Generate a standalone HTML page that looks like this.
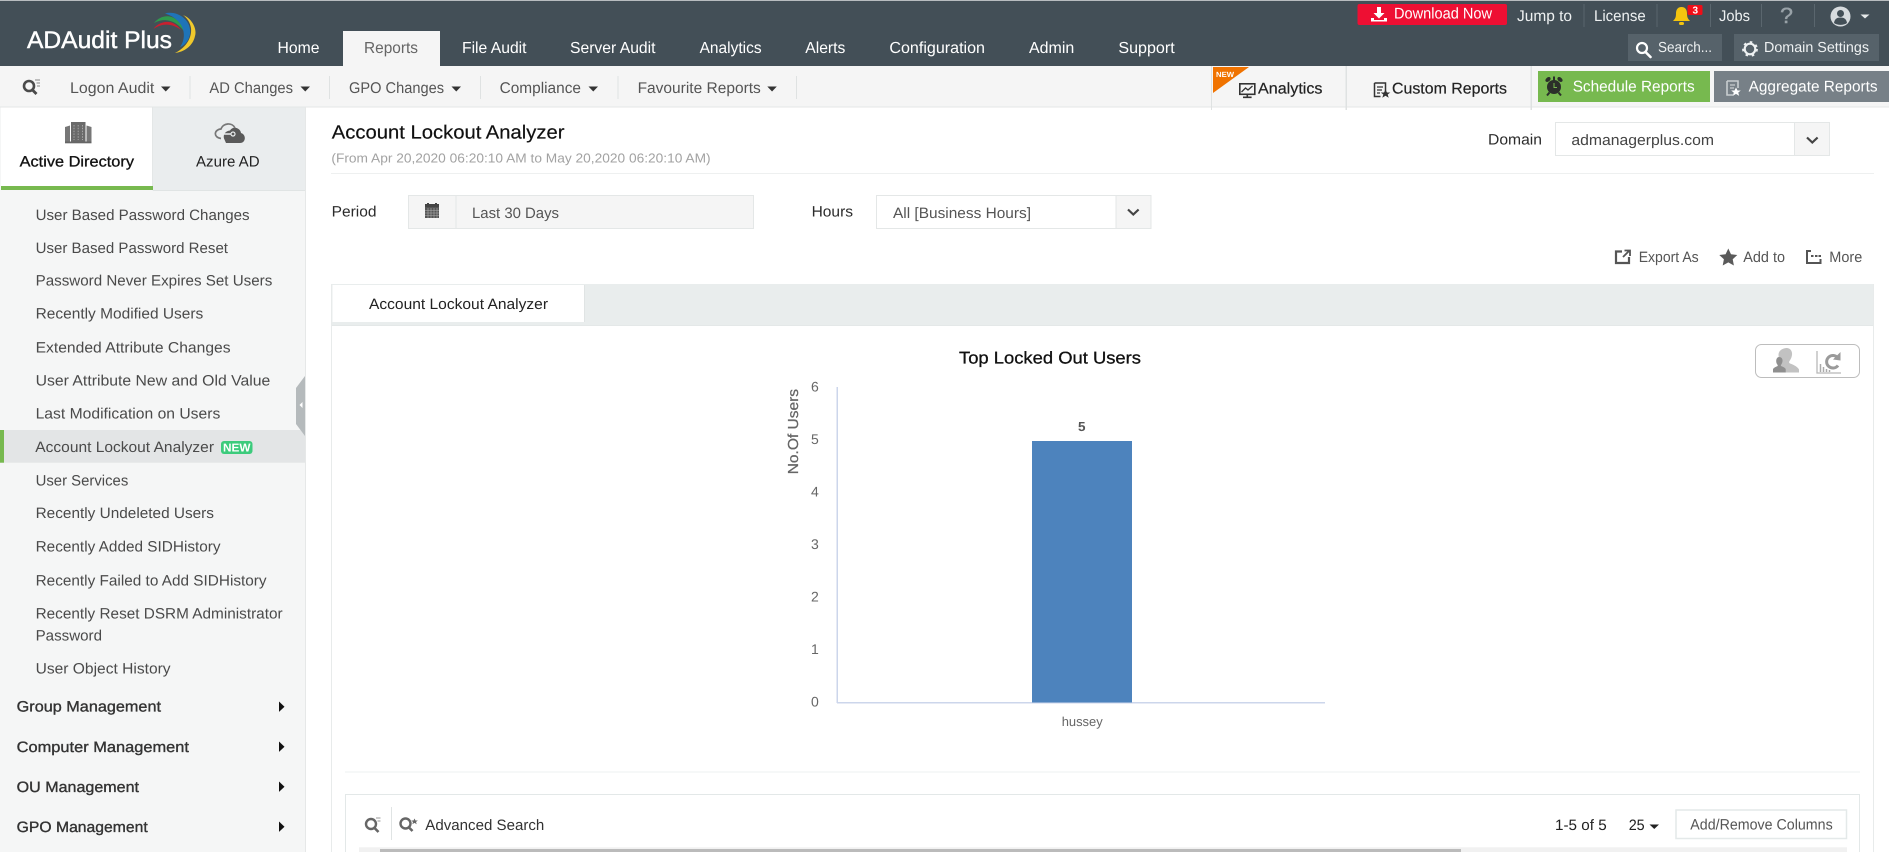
<!DOCTYPE html>
<html lang="en">
<head>
<meta charset="utf-8">
<title>ADAudit Plus - Account Lockout Analyzer</title>
<style>
html,body{margin:0;padding:0;background:#fff;width:1889px;height:852px;overflow:hidden}
svg{display:block}
text{font-family:"Liberation Sans",Arial,sans-serif;text-rendering:geometricPrecision;white-space:pre}
.nav{font-size:16px;fill:#fff}
.top{font-size:15.5px;fill:#eef1f2}
.sub{font-size:15.5px;fill:#555}
.dark{font-size:15.5px;fill:#222}
.side{font-size:15px;fill:#4a4a4a}
.group{font-size:15px;fill:#333;stroke:#333;stroke-width:.35px}
.lab{font-size:15px;fill:#2b2b2b}
.val{font-size:15px;fill:#555}
.tick{font-size:14px;fill:#666}
</style>
</head>
<body>
<svg xmlns="http://www.w3.org/2000/svg" width="1889" height="852" viewBox="0 0 1889 852">
<rect width="1889" height="852" fill="#fff"/>

<!-- Header -->
<rect y="0" width="1889" height="1" fill="#b8bcbf"/>
<rect y="1" width="1889" height="65" fill="#434f57"/>

<!-- Logo -->
<text x="27" y="48" font-size="24" fill="#fff" stroke="#fff" stroke-width=".45" textLength="145" lengthAdjust="spacingAndGlyphs">ADAudit Plus</text>
<path d="M153.500 29C158 22 172 17 181 30C172 23 162 23 153.500 29Z" fill="#c8202f"/>
<path d="M154 23C162 13 178 12 186 34C177 20 165 17 154 23Z" fill="#2f9a4d"/>
<path d="M165 13.500C177 10 192 20 190 34C189 41 184 46 180 47C187 38 186 20 165 13.500Z" fill="#1f74b8"/>
<path d="M183 15C193 19 197 30 195 36C193 46 184 52 175 53C187 47 192 37 191 28C190 22 187 18 183 15Z" fill="#f0c92c"/>

<!-- Main nav -->
<rect x="343" y="31" width="97" height="35" fill="#f5f5f5"/>
<text class="nav" x="277.500" y="53" textLength="42" lengthAdjust="spacingAndGlyphs">Home</text>
<text class="nav" x="364" y="53" textLength="54" lengthAdjust="spacingAndGlyphs" style="fill:#666">Reports</text>
<text class="nav" x="462" y="53" textLength="64.500" lengthAdjust="spacingAndGlyphs">File Audit</text>
<text class="nav" x="570" y="53" textLength="85.500" lengthAdjust="spacingAndGlyphs">Server Audit</text>
<text class="nav" x="699.600" y="53" textLength="62" lengthAdjust="spacingAndGlyphs">Analytics</text>
<text class="nav" x="805.300" y="53" textLength="40" lengthAdjust="spacingAndGlyphs">Alerts</text>
<text class="nav" x="889.400" y="53" textLength="95.600" lengthAdjust="spacingAndGlyphs">Configuration</text>
<text class="nav" x="1029" y="53" textLength="45.300" lengthAdjust="spacingAndGlyphs">Admin</text>
<text class="nav" x="1118.400" y="53" textLength="56.300" lengthAdjust="spacingAndGlyphs">Support</text>

<!-- Top right -->
<rect x="1357.500" y="4" width="149.500" height="21" rx="2" fill="#ee0f33"/>
<path d="M1377 7h4v6h3.500l-5.500 5.500l-5.500-5.500h3.500zM1371 18h3v2h10v-2h3v3.500h-16z" fill="#fff"/>
<text class="top" x="1394" y="18.500" textLength="98" lengthAdjust="spacingAndGlyphs" style="fill:#fff">Download Now</text>
<text class="top" x="1517" y="21" textLength="55" lengthAdjust="spacingAndGlyphs">Jump to</text>
<rect x="1583.500" y="4" width="1" height="23" fill="#5a666e"/>
<text class="top" x="1594" y="21" textLength="51.700" lengthAdjust="spacingAndGlyphs">License</text>
<rect x="1656.500" y="4" width="1" height="23" fill="#5a666e"/>
<path d="M1681.500 7c-4 0-5.500 3-5.500 6.500c0 4-1 5.500-3 7.500h17c-2-2-3-3.500-3-7.500c0-3.500-1.500-6.500-5.500-6.500z" fill="#f4c40f"/>
<rect x="1679" y="22" width="5" height="3" rx="1.500" fill="#f4c40f"/>
<rect x="1687.500" y="5" width="15" height="10" rx="1.500" fill="#f00d17"/>
<text x="1692.500" y="13.500" font-size="10" font-weight="bold" fill="#fff">3</text>
<rect x="1710" y="4" width="1" height="23" fill="#5a666e"/>
<text class="top" x="1719" y="21" textLength="31" lengthAdjust="spacingAndGlyphs">Jobs</text>
<rect x="1761" y="4" width="1" height="23" fill="#5a666e"/>
<text x="1780" y="23" font-size="22" fill="#99a2a8" stroke="#99a2a8" stroke-width=".4" textLength="13" lengthAdjust="spacingAndGlyphs">?</text>
<rect x="1814" y="4" width="1" height="23" fill="#5a666e"/>
<circle cx="1840.500" cy="16.500" r="10" fill="#d7dbde"/>
<circle cx="1840.500" cy="13.500" r="3.500" fill="#434f57"/>
<path d="M1834 23c.5-4 3-5.500 6.500-5.500s6 1.500 6.500 5.500c-3.500 2.500-9.500 2.500-13 0z" fill="#434f57"/>
<path d="M1860.500 14.500h9l-4.500 4z" fill="#e6e9ea"/>

<rect x="1628" y="34" width="94" height="27" fill="#56626a"/>
<circle cx="1642" cy="48" r="5" fill="none" stroke="#fff" stroke-width="2.200"/>
<path d="M1645.500 52l5 5" stroke="#fff" stroke-width="2.600" stroke-linecap="round"/>
<text class="top" x="1658" y="52" textLength="54" lengthAdjust="spacingAndGlyphs" style="font-size:14.500px">Search...</text>
<rect x="1734" y="34" width="145" height="27" fill="#56626a"/>
<circle cx="1750" cy="49" r="5.300" fill="none" stroke="#eef1f2" stroke-width="2.200"/>
<circle cx="1750" cy="49" r="7" fill="none" stroke="#eef1f2" stroke-width="1.800" stroke-dasharray="2.600 3.900"/>
<text class="top" x="1764" y="52" textLength="105" lengthAdjust="spacingAndGlyphs" style="font-size:14.500px">Domain Settings</text>

<!-- Sub nav -->
<rect y="66" width="1889" height="41" fill="#f5f5f5"/>
<rect y="106.500" width="1889" height="1" fill="#e4e6e6"/>
<circle cx="29" cy="86" r="5" fill="none" stroke="#4a4a4a" stroke-width="2.600"/>
<path d="M32.500 90l4 4" stroke="#4a4a4a" stroke-width="2.800"/>
<path d="M35 80h5M36.500 83h3.500M37 86h3" stroke="#888" stroke-width="1"/>

<text class="sub" x="70" y="93" textLength="84.300" lengthAdjust="spacingAndGlyphs">Logon Audit</text>
<path d="M161 86.500h9.500l-4.750 5z" fill="#333"/>
<rect x="189.500" y="76" width="1" height="23" fill="#dfe2e2"/>
<text class="sub" x="209.400" y="93" textLength="83.600" lengthAdjust="spacingAndGlyphs">AD Changes</text>
<path d="M300.500 86.500h9.500l-4.750 5z" fill="#333"/>
<rect x="329" y="76" width="1" height="23" fill="#dfe2e2"/>
<text class="sub" x="349" y="93" textLength="95" lengthAdjust="spacingAndGlyphs">GPO Changes</text>
<path d="M451.500 86.500h9.500l-4.750 5z" fill="#333"/>
<rect x="480" y="76" width="1" height="23" fill="#dfe2e2"/>
<text class="sub" x="499.600" y="93" textLength="81.400" lengthAdjust="spacingAndGlyphs">Compliance</text>
<path d="M588.500 86.500h9.500l-4.750 5z" fill="#333"/>
<rect x="617.500" y="76" width="1" height="23" fill="#dfe2e2"/>
<text class="sub" x="637.600" y="93" textLength="123.200" lengthAdjust="spacingAndGlyphs">Favourite Reports</text>
<path d="M767.300 86.500h9.500l-4.750 5z" fill="#333"/>
<rect x="796" y="76" width="1" height="23" fill="#dfe2e2"/>

<rect x="1211" y="66" width="1" height="44" fill="#dfe2e2"/>
<path d="M1213 67h36l-36 26z" fill="#f07300"/>
<text x="1216" y="77" font-size="7.500" font-weight="bold" fill="#fff" textLength="18" lengthAdjust="spacingAndGlyphs">NEW</text>
<rect x="1239.800" y="83.800" width="15" height="10.500" fill="#f5f5f5" stroke="#333" stroke-width="1.600"/>
<path d="M1241.500 92l4-4l2.500 2l4.500-4" fill="none" stroke="#333" stroke-width="1.300"/>
<path d="M1247.300 95v2M1243 97.300h8.600" stroke="#333" stroke-width="1.600"/>
<text class="dark" x="1258" y="93.500" textLength="64.500" lengthAdjust="spacingAndGlyphs" style="stroke:#222;stroke-width:.2px">Analytics</text>
<rect x="1345.500" y="66" width="1.500" height="44" fill="#dfe2e2"/>
<path d="M1374.500 83h11v8M1374.500 83v13.500h6" fill="none" stroke="#333" stroke-width="1.500"/>
<path d="M1377 87h6M1377 90h5M1377 93h3" stroke="#333" stroke-width="1.200"/>
<path d="M1385.500 89.500l1.500 3h3.300l-2.600 2l1 3.200l-3.200-2l-3.200 2l1-3.200l-2.600-2h3.300z" fill="#333"/>
<text class="dark" x="1392" y="93.500" textLength="115" lengthAdjust="spacingAndGlyphs" style="stroke:#222;stroke-width:.2px">Custom Reports</text>
<rect x="1530.500" y="66" width="1.500" height="44" fill="#dfe2e2"/>

<rect x="1538" y="71" width="172" height="31" fill="#77b94f"/>
<circle cx="1554" cy="87" r="7" fill="#2b2f2a"/>
<ellipse cx="1548" cy="79.500" rx="3" ry="2" transform="rotate(-40 1548 79.500)" fill="#2b2f2a"/>
<ellipse cx="1560" cy="79.500" rx="3" ry="2" transform="rotate(40 1560 79.500)" fill="#2b2f2a"/>
<rect x="1553" y="76.500" width="2" height="4" fill="#2b2f2a"/>
<path d="M1549.500 92.500l-2.500 3M1558.500 92.500l2.500 3" stroke="#2b2f2a" stroke-width="2"/>
<path d="M1554 83v4.500h3" fill="none" stroke="#77b94f" stroke-width="1"/>
<text class="top" x="1572.700" y="91.500" textLength="122" lengthAdjust="spacingAndGlyphs" style="fill:#fff">Schedule Reports</text>
<rect x="1714" y="71" width="175" height="31" fill="#778087"/>
<path d="M1727 81h11v7M1727 81v14h6" fill="none" stroke="#c9cdd0" stroke-width="1.600"/>
<path d="M1730 85h5M1730 88h4" stroke="#c9cdd0" stroke-width="1.200"/>
<path d="M1736 87.500l1.500 3h3.300l-2.600 2.100l1 3.300l-3.200-2l-3.200 2l1-3.300l-2.600-2.100h3.300z" fill="#fff"/>
<text class="top" x="1748.600" y="91.500" textLength="129" lengthAdjust="spacingAndGlyphs" style="fill:#fff">Aggregate Reports</text>

<!-- Sidebar -->
<rect x="0" y="107.500" width="305" height="744.500" fill="#f5f6f6"/>
<rect x="305" y="107" width="1" height="745" fill="#e6e8e8"/>
<rect x="1" y="107.500" width="151" height="79" fill="#fff"/>
<rect x="152" y="107.500" width="153" height="83" fill="#eaedee"/>
<rect x="152" y="107.500" width="1" height="79" fill="#e4e7e7"/>
<rect x="1" y="186" width="152" height="4" fill="#77b94f"/>
<rect x="153" y="190" width="152" height="1" fill="#e0e4e4"/>
<path d="M65 127l5-1.500v16h-5zM91.500 127l-5-1.500v16h5z" fill="#777"/>
<rect x="71" y="122" width="14.500" height="19.500" fill="#6a6a6a"/>
<path d="M74 125v15M78.200 125v15M82.500 125v15" stroke="#a5a5a5" stroke-width="1" stroke-dasharray="1.500 1.300"/>
<rect x="65" y="141.500" width="26.500" height="1.800" fill="#666"/>
<text class="dark" x="19.600" y="166.500" textLength="114.400" lengthAdjust="spacingAndGlyphs" style="fill:#111;stroke:#111;stroke-width:.3px;font-size:15px">Active Directory</text>
<path d="M226 143h14c6 0 6.500-8.500 1-10c-.5-5-8-7.500-11-2.500c-5 .5-7 4.500-6 8z" fill="#5a5a5a"/>
<path d="M221 138.500c-8-1-7-9 0-9.500c2-6 11-7 14-1" fill="none" stroke="#777" stroke-width="1.700"/>
<path d="M218 134h13" stroke="#eaedee" stroke-width="1.500"/>
<circle cx="233" cy="134" r="2" fill="none" stroke="#eaedee" stroke-width="1.200"/>
<text class="lab" x="196" y="166.500" textLength="63.600" lengthAdjust="spacingAndGlyphs" style="fill:#222">Azure AD</text>

<rect x="0" y="430" width="305" height="32.700" fill="#e3e5e6"/>
<rect x="0" y="430" width="4" height="32.700" fill="#77b94f"/>
<path d="M305 376v60l-9-12v-36z" fill="#b5babc"/>
<path d="M302.500 402v6l-3-3z" fill="#fff"/>

<text class="side" x="35.600" y="220" textLength="214" lengthAdjust="spacingAndGlyphs">User Based Password Changes</text>
<text class="side" x="35.600" y="253" textLength="192.400" lengthAdjust="spacingAndGlyphs">User Based Password Reset</text>
<text class="side" x="35.600" y="285.400" textLength="236.700" lengthAdjust="spacingAndGlyphs">Password Never Expires Set Users</text>
<text class="side" x="35.600" y="318.700" textLength="167.700" lengthAdjust="spacingAndGlyphs">Recently Modified Users</text>
<text class="side" x="35.600" y="352.700" textLength="195" lengthAdjust="spacingAndGlyphs">Extended Attribute Changes</text>
<text class="side" x="35.600" y="385.400" textLength="234.700" lengthAdjust="spacingAndGlyphs">User Attribute New and Old Value</text>
<text class="side" x="35.600" y="418.700" textLength="184.700" lengthAdjust="spacingAndGlyphs">Last Modification on Users</text>
<text class="side" x="35.300" y="452" textLength="178.700" lengthAdjust="spacingAndGlyphs">Account Lockout Analyzer</text>
<rect x="221" y="441" width="31.500" height="13" rx="3" fill="#3ccb7c"/>
<text x="223" y="451.500" font-size="11.500" font-weight="bold" fill="#fff" textLength="27.500" lengthAdjust="spacingAndGlyphs">NEW</text>
<text class="side" x="35.600" y="485.400" textLength="92.700" lengthAdjust="spacingAndGlyphs">User Services</text>
<text class="side" x="35.600" y="518" textLength="178.400" lengthAdjust="spacingAndGlyphs">Recently Undeleted Users</text>
<text class="side" x="35.600" y="551.700" textLength="185" lengthAdjust="spacingAndGlyphs">Recently Added SIDHistory</text>
<text class="side" x="35.600" y="585.400" textLength="231" lengthAdjust="spacingAndGlyphs">Recently Failed to Add SIDHistory</text>
<text class="side" x="35.600" y="618.700" textLength="247" lengthAdjust="spacingAndGlyphs">Recently Reset DSRM Administrator</text>
<text class="side" x="35.600" y="640.500" textLength="66.400" lengthAdjust="spacingAndGlyphs">Password</text>
<text class="side" x="35.600" y="673.500" textLength="135" lengthAdjust="spacingAndGlyphs">User Object History</text>

<text class="group" x="16.700" y="711.700" textLength="144.300" lengthAdjust="spacingAndGlyphs">Group Management</text>
<path d="M279 701.500l5.500 5.200l-5.500 5.200z" fill="#111"/>
<text class="group" x="16.700" y="752" textLength="172.300" lengthAdjust="spacingAndGlyphs">Computer Management</text>
<path d="M279 741.500l5.500 5.200l-5.500 5.200z" fill="#111"/>
<text class="group" x="16.700" y="792" textLength="122.300" lengthAdjust="spacingAndGlyphs">OU Management</text>
<path d="M279 781.500l5.500 5.200l-5.500 5.200z" fill="#111"/>
<text class="group" x="16.700" y="832" textLength="131" lengthAdjust="spacingAndGlyphs">GPO Management</text>
<path d="M279 821.500l5.500 5.200l-5.500 5.200z" fill="#111"/>

<!-- Content heading -->
<text x="331.800" y="138.300" font-size="19" fill="#111" stroke="#111" stroke-width=".2" textLength="232.700" lengthAdjust="spacingAndGlyphs">Account Lockout Analyzer</text>
<text x="331.400" y="162.300" font-size="13" fill="#a2a2a2" textLength="379.200" lengthAdjust="spacingAndGlyphs">(From Apr 20,2020 06:20:10 AM to May 20,2020 06:20:10 AM)</text>
<rect x="331" y="173" width="1543" height="1" fill="#eef0f0"/>

<text class="lab" x="1488" y="144.300" textLength="54" lengthAdjust="spacingAndGlyphs">Domain</text>
<rect x="1555.500" y="122.500" width="274" height="33" fill="#fff" stroke="#e4e7e7"/>
<rect x="1794.500" y="123" width="34.500" height="32" fill="#f5f5f5"/>
<rect x="1794" y="123" width="1" height="32" fill="#e4e7e7"/>
<path d="M1807 137.500l5.300 5l5.300-5" fill="none" stroke="#444" stroke-width="2.200"/>
<text class="val" x="1571.400" y="145" textLength="142.600" lengthAdjust="spacingAndGlyphs" style="fill:#444">admanagerplus.com</text>

<text class="lab" x="331.600" y="216.700" textLength="44.900" lengthAdjust="spacingAndGlyphs">Period</text>
<rect x="408.500" y="195.500" width="345" height="33" fill="#f5f5f5" stroke="#e4e7e7"/>
<rect x="455.500" y="196" width="1" height="32" fill="#e4e7e7"/>
<rect x="425" y="205" width="14" height="13" fill="#555"/>
<rect x="425" y="204" width="14" height="3" fill="#444"/>
<path d="M428 203v3M436 203v3" stroke="#444" stroke-width="2"/>
<path d="M425 210.500h14M425 213h14M425 215.500h14M428 208v10M431 208v10M434 208v10M437 208v10" stroke="#b0b0b0" stroke-width=".6"/>
<text class="val" x="472" y="218" textLength="87" lengthAdjust="spacingAndGlyphs">Last 30 Days</text>

<text class="lab" x="811.600" y="216.700" textLength="41.400" lengthAdjust="spacingAndGlyphs">Hours</text>
<rect x="876.500" y="195.500" width="274.500" height="33" fill="#fff" stroke="#e4e7e7"/>
<rect x="1116" y="196" width="34.500" height="32" fill="#f5f5f5"/>
<rect x="1115.500" y="196" width="1" height="32" fill="#e4e7e7"/>
<path d="M1128 209.500l5.300 5l5.300-5" fill="none" stroke="#444" stroke-width="2.200"/>
<text class="val" x="893" y="218" textLength="138" lengthAdjust="spacingAndGlyphs">All [Business Hours]</text>

<!-- Actions -->
<path d="M1622 251.500h-6v11.500h13v-6" fill="none" stroke="#555" stroke-width="2.200"/>
<path d="M1623 257l6-6M1624.500 250.500h5.500v5.500" fill="none" stroke="#555" stroke-width="1.800"/>
<text class="val" x="1638.700" y="262" textLength="60" lengthAdjust="spacingAndGlyphs">Export As</text>
<path d="M1728.300 248.500l2.700 5.700l6.300 .8l-4.600 4.300l1.200 6.200l-5.600-3.100l-5.600 3.100l1.200-6.200l-4.600-4.300l6.300-.8z" fill="#5a5a5a"/>
<text class="val" x="1743.300" y="262" textLength="41.700" lengthAdjust="spacingAndGlyphs">Add to</text>
<path d="M1811 251h-4v12h13.500v-4" fill="none" stroke="#555" stroke-width="2"/>
<path d="M1811 256h2.500M1815 256h2.500M1818.500 256h2.500" stroke="#555" stroke-width="2"/>
<text class="val" x="1829.300" y="262" textLength="33" lengthAdjust="spacingAndGlyphs">More</text>

<!-- Report panel -->
<rect x="331" y="284" width="1543" height="41" fill="#e9eded"/>
<rect x="332.500" y="285" width="251.500" height="37" fill="#fff"/>
<rect x="584" y="285" width="1" height="37" fill="#e0e4e4"/>
<rect x="331" y="284" width="1" height="568" fill="#e8ebeb"/>
<rect x="1873" y="284" width="1" height="568" fill="#e8ebeb"/>
<rect x="332" y="325" width="1541" height="1" fill="#e4e8e8"/>
<text class="lab" x="369" y="309" textLength="179" lengthAdjust="spacingAndGlyphs" style="fill:#222">Account Lockout Analyzer</text>

<!-- Chart toggle -->
<rect x="1755.500" y="344.500" width="104" height="33" rx="6" fill="#fff" stroke="#bdbdbd"/>
<path d="M1786.500 348c4 0 6 3.200 5.500 7c-.3 2.800-1.800 5-2.800 6.500v1.500c3 1.500 8 3 9.800 6.500v3h-24v-5c3-1 5-2 6-3v-3c-1.500-2-2.500-4-2.500-6.500c0-4 3-6.500 8-7z" fill="#c2c2c2"/>
<path d="M1779 357c2.500 0 3.800 1.800 3.500 4.200c-.2 1.700-1 3-1.600 3.800v1c2 .8 4 1.500 4.800 3v3.500h-12.700v-3.500c1-1.500 2.800-2.200 4.700-3v-1c-.7-.8-1.500-2.100-1.500-3.800c0-2.400 1-4.200 2.800-4.200z" fill="#8f8f8f"/>
<path d="M1817 351v22h24" fill="none" stroke="#b8b8b8" stroke-width="1.300"/>
<path d="M1820.500 364v8M1823.500 367v5M1826.500 369v3M1829.500 370v2" stroke="#aaa" stroke-width="1.500"/>
<path d="M1838 365.500a6.300 6.300 0 1 1 0-7.500" fill="none" stroke="#9a9a9a" stroke-width="3"/>
<path d="M1840.500 352v8.500l-7.500-1z" fill="#9a9a9a"/>

<!-- Chart -->
<text x="959" y="363.300" font-size="17" fill="#111" stroke="#111" stroke-width=".3" textLength="182" lengthAdjust="spacingAndGlyphs">Top Locked Out Users</text>
<rect x="836.500" y="387" width="1.500" height="316" fill="#ccd6eb"/>
<rect x="837" y="702" width="488" height="1.500" fill="#ccd6eb"/>
<rect x="1032" y="441" width="100" height="261.500" fill="#4d83bd"/>
<text x="1078" y="431" font-size="13" font-weight="bold" fill="#555" textLength="7.500" lengthAdjust="spacingAndGlyphs">5</text>
<text class="tick" x="811" y="391.700">6</text>
<text class="tick" x="811" y="444">5</text>
<text class="tick" x="811" y="496.700">4</text>
<text class="tick" x="811" y="549">3</text>
<text class="tick" x="811" y="601.700">2</text>
<text class="tick" x="811" y="654">1</text>
<text class="tick" x="811" y="706.700">0</text>
<text x="0" y="0" transform="translate(798,474.300) rotate(-90)" font-size="14.500" fill="#666" stroke="#666" stroke-width=".25" textLength="85.300" lengthAdjust="spacingAndGlyphs">No.Of Users</text>
<text x="1061.700" y="726" font-size="13" fill="#666" textLength="41" lengthAdjust="spacingAndGlyphs">hussey</text>

<!-- Table toolbar -->
<rect x="345" y="771.500" width="1515" height="1" fill="#eef0f0"/>
<rect x="345.500" y="794.500" width="1514" height="70" fill="#fff" stroke="#e3e8e8"/>
<circle cx="371" cy="824" r="5" fill="none" stroke="#666" stroke-width="2.400"/>
<path d="M374.500 828l4 4" stroke="#666" stroke-width="2.600"/>
<path d="M376 818h4.500M377.500 821h3" stroke="#999" stroke-width="1"/>
<rect x="391" y="807" width="1" height="33" fill="#e0e4e4"/>
<circle cx="405.500" cy="823.500" r="5" fill="none" stroke="#666" stroke-width="2.400"/>
<path d="M409 827.500l3.500 3.500" stroke="#666" stroke-width="2.600"/>
<path d="M414.500 818.500l1 2h2.300l-1.800 1.500l.7 2.300l-2.200-1.400l-2.200 1.400l.7-2.300l-1.800-1.500h2.300z" fill="#666"/>
<text class="lab" x="425.300" y="830" textLength="119" lengthAdjust="spacingAndGlyphs" style="fill:#333">Advanced Search</text>
<text class="lab" x="1555" y="830" textLength="51.700" lengthAdjust="spacingAndGlyphs" style="fill:#222">1-5 of 5</text>
<text class="lab" x="1628.700" y="830" textLength="16" lengthAdjust="spacingAndGlyphs" style="fill:#222">25</text>
<path d="M1649.500 824.500h9.500l-4.750 4.500z" fill="#222"/>
<rect x="1676" y="810" width="170.500" height="28.500" fill="#fff" stroke="#e4e9e9" stroke-width="1.500"/>
<text class="val" x="1690.300" y="829.300" textLength="142.400" lengthAdjust="spacingAndGlyphs">Add/Remove Columns</text>
<rect x="359" y="847.300" width="1488" height="4.700" fill="#f1f1f1"/>
<rect x="380" y="849" width="1081" height="3" fill="#bbbbbb"/>
</svg>
</body>
</html>
